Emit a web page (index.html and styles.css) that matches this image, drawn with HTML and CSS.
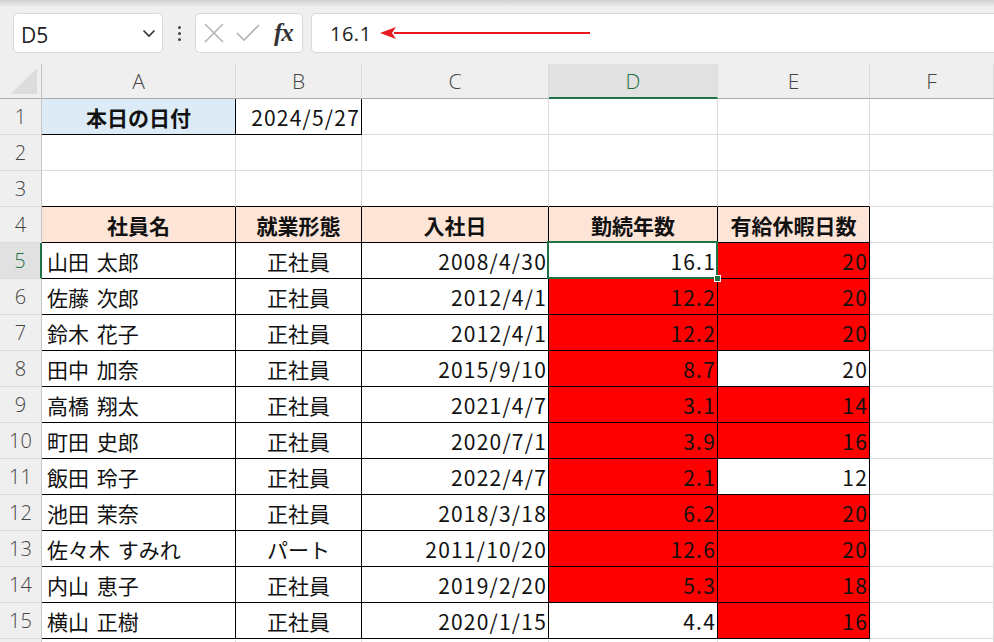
FILE: index.html
```html
<!DOCTYPE html>
<html lang="ja">
<head>
<meta charset="utf-8">
<title>Sheet</title>
<link rel="stylesheet" href="styles.css">
</head>
<body>
<div class="app">
  <div class="topshade"></div>
  <div class="toolbar">
    <div class="namebox">
      <span class="nb-text">D5</span>
      <svg class="chev" width="14" height="10" viewBox="0 0 14 10"><path d="M1.5 2.5 L7 8 L12.5 2.5" fill="none" stroke="#333" stroke-width="1.6"/></svg>
    </div>
    <div class="dots"><i></i><i></i><i></i></div>
    <div class="fxbox">
      <svg width="22" height="22" viewBox="0 0 22 22"><path d="M2 2 L20 20 M20 2 L2 20" stroke="#b4b4b4" stroke-width="1.6" fill="none"/></svg>
      <svg width="26" height="22" viewBox="0 0 26 22"><path d="M2 11 L9 18 L24 3" stroke="#b4b4b4" stroke-width="1.6" fill="none"/></svg>
      <span class="fx">fx</span>
    </div>
    <div class="formula">
      <span class="f-text">16.1</span>
      <svg class="arrow" width="212" height="14" viewBox="0 0 212 14"><path d="M14 7 L210 7" stroke="#e8191f" stroke-width="2"/><path d="M0 7 L16 1 L12 7 L16 13 Z" fill="#e8191f"/></svg>
    </div>
  </div>

  <div class="sheet">
    <div class="corner"><span class="tri"></span></div>
    <div class="ch">A</div><div class="ch">B</div><div class="ch">C</div><div class="ch sel">D</div><div class="ch">E</div><div class="ch">F</div>

    <div class="rh">1</div>
    <div class="c blue bold ctr bk">本日の日付</div>
    <div class="c r bk">2024/5/27</div>
    <div class="c"></div><div class="c"></div><div class="c"></div><div class="c"></div>

    <div class="rh">2</div>
    <div class="c"></div><div class="c"></div><div class="c"></div><div class="c"></div><div class="c"></div><div class="c"></div>

    <div class="rh">3</div>
    <div class="c bb"></div><div class="c bb"></div><div class="c bb"></div><div class="c bb"></div><div class="c bb"></div><div class="c"></div>

    <div class="rh">4</div>
    <div class="c peach bold ctr bk">社員名</div>
    <div class="c peach bold ctr bk">就業形態</div>
    <div class="c peach bold ctr bk">入社日</div>
    <div class="c peach bold ctr bk">勤続年数</div>
    <div class="c peach bold ctr bk">有給休暇日数</div>
    <div class="c"></div>

    <div class="rh selr">5</div>
    <div class="c bk">山田 太郎</div><div class="c bk ctr">正社員</div><div class="c bk r">2008/4/30</div><div class="c bk r active">16.1<span class="handle"></span></div><div class="c bk r red">20</div><div class="c"></div>

    <div class="rh">6</div>
    <div class="c bk">佐藤 次郎</div><div class="c bk ctr">正社員</div><div class="c bk r">2012/4/1</div><div class="c bk r red">12.2</div><div class="c bk r red">20</div><div class="c"></div>

    <div class="rh">7</div>
    <div class="c bk">鈴木 花子</div><div class="c bk ctr">正社員</div><div class="c bk r">2012/4/1</div><div class="c bk r red">12.2</div><div class="c bk r red">20</div><div class="c"></div>

    <div class="rh">8</div>
    <div class="c bk">田中 加奈</div><div class="c bk ctr">正社員</div><div class="c bk r">2015/9/10</div><div class="c bk r red">8.7</div><div class="c bk r">20</div><div class="c"></div>

    <div class="rh">9</div>
    <div class="c bk">高橋 翔太</div><div class="c bk ctr">正社員</div><div class="c bk r">2021/4/7</div><div class="c bk r red">3.1</div><div class="c bk r red">14</div><div class="c"></div>

    <div class="rh">10</div>
    <div class="c bk">町田 史郎</div><div class="c bk ctr">正社員</div><div class="c bk r">2020/7/1</div><div class="c bk r red">3.9</div><div class="c bk r red">16</div><div class="c"></div>

    <div class="rh">11</div>
    <div class="c bk">飯田 玲子</div><div class="c bk ctr">正社員</div><div class="c bk r">2022/4/7</div><div class="c bk r red">2.1</div><div class="c bk r">12</div><div class="c"></div>

    <div class="rh">12</div>
    <div class="c bk">池田 茉奈</div><div class="c bk ctr">正社員</div><div class="c bk r">2018/3/18</div><div class="c bk r red">6.2</div><div class="c bk r red">20</div><div class="c"></div>

    <div class="rh">13</div>
    <div class="c bk">佐々木 すみれ</div><div class="c bk ctr">パート</div><div class="c bk r">2011/10/20</div><div class="c bk r red">12.6</div><div class="c bk r red">20</div><div class="c"></div>

    <div class="rh">14</div>
    <div class="c bk">内山 恵子</div><div class="c bk ctr">正社員</div><div class="c bk r">2019/2/20</div><div class="c bk r red">5.3</div><div class="c bk r red">18</div><div class="c"></div>

    <div class="rh">15</div>
    <div class="c bk">横山 正樹</div><div class="c bk ctr">正社員</div><div class="c bk r">2020/1/15</div><div class="c bk r">4.4</div><div class="c bk r red">16</div><div class="c"></div>

    <div class="rh"></div>
    <div class="c"></div><div class="c"></div><div class="c"></div><div class="c"></div><div class="c"></div><div class="c"></div>
  </div>
</div>
</body>
</html>
```

FILE: styles.css
```css
* { box-sizing: border-box; }
html, body { margin: 0; padding: 0; }
body {
  width: 994px;
  height: 642px;
  overflow: hidden;
  background: #ffffff;
  font-family: "Noto Sans CJK JP", "Noto Sans", sans-serif;
}
.app { width: 994px; height: 642px; overflow: hidden; background: #efefef; }

.topshade {
  height: 6px;
  background: linear-gradient(#d2d2d2, #e9e9e9);
}
.toolbar {
  height: 58px;
  display: flex;
  align-items: flex-start;
  padding: 7px 0 0 13px;
  background: #efefef;
}
.namebox {
  width: 150px;
  height: 40px;
  background: #fff;
  border: 1px solid #d8d8d8;
  border-radius: 5px;
  display: flex;
  align-items: center;
  justify-content: space-between;
  padding: 0 6px 0 7px;
}
.nb-text { font-family: "Open Sans", "Noto Sans", sans-serif; font-size: 21px; color: #222; padding-top: 4px; }
.dots {
  width: 32px;
  height: 40px;
  display: flex;
  flex-direction: column;
  align-items: center;
  justify-content: center;
  gap: 3px;
}
.dots i { width: 3px; height: 3px; background: #444; border-radius: 50%; display: block; }
.fxbox {
  width: 108px;
  height: 40px;
  background: #fff;
  border: 1px solid #d8d8d8;
  border-radius: 5px;
  display: flex;
  align-items: center;
  padding: 0 0 0 7px;
  gap: 10px;
}
.fx {
  font-family: "Liberation Serif", "DejaVu Serif", serif;
  font-style: italic;
  font-weight: bold;
  font-size: 25px;
  color: #333;
  margin-left: 3px;
  letter-spacing: -1px;
}
.formula {
  flex: 1;
  margin-left: 8px;
  margin-right: -20px;
  height: 40px;
  background: #fff;
  border: 1px solid #d8d8d8;
  border-radius: 5px;
  display: flex;
  align-items: center;
  padding-left: 18px;
}
.f-text { font-family: "Open Sans", "Noto Sans", sans-serif; font-size: 20px; color: #222; letter-spacing: 0.5px; }
.arrow { margin-left: 8px; }

.sheet {
  display: grid;
  grid-template-columns: 42px 194px 126px 187px 169px 152px 124px;
  grid-template-rows: 35px repeat(16, 36px);
  background: #fff;
}
.corner {
  background: #efefef;
  border-right: 1px solid #c6c6c6;
  border-bottom: 1px solid #ababab;
  position: relative;
}
.tri {
  position: absolute;
  right: 4px;
  bottom: 4px;
  width: 26px;
  height: 26px;
  background: #dcdcdc;
  clip-path: polygon(100% 0, 100% 100%, 0 100%);
}
.ch {
  background: #efefef;
  border-right: 1px solid #dadada;
  border-bottom: 1px solid #ababab;
  display: flex;
  align-items: center;
  justify-content: center;
  font-family: "Open Sans", "Noto Sans", sans-serif;
  font-weight: 300;
  font-size: 21px;
  color: #444;
}
.ch.sel {
  background: #e1e1e1;
  color: #217346;
  border-bottom: 2px solid #217346;
}
.rh {
  background: #efefef;
  border-right: 1px solid #c6c6c6;
  border-bottom: 1px solid #dadada;
  display: flex;
  align-items: center;
  justify-content: center;
  font-family: "Open Sans", "Noto Sans", sans-serif;
  font-weight: 300;
  font-size: 20px;
  color: #444;
}
.rh.selr {
  background: #e1e1e1;
  color: #217346;
  border-right: 2px solid #217346;
}
.c {
  border-right: 1px solid #dcdcdc;
  border-bottom: 1px solid #dcdcdc;
  display: flex;
  align-items: center;
  padding: 1px 5px 0 5px;
  font-size: 21px;
  color: #111;
  white-space: nowrap;
  word-spacing: 3px;
  position: relative;
}
.c.r { justify-content: flex-end; padding-right: 1px; letter-spacing: 1.2px; }
.c.ctr { justify-content: center; }
.c.bold { font-weight: bold; }
.c.bk { border-right-color: #000; border-bottom-color: #000; }
.c.bb { border-bottom-color: #000; }
.blue { background: #ddebf7; }
.peach { background: #fce4d6; }
.red { background: #ff0000; }
.active::after {
  content: "";
  position: absolute;
  left: -2px;
  top: -2px;
  right: -1px;
  bottom: -1px;
  border: 2px solid #217346;
}
.handle {
  position: absolute;
  right: -4px;
  bottom: -4px;
  width: 7px;
  height: 7px;
  background: #217346;
  border: 1px solid #fff;
  z-index: 2;
}
```
